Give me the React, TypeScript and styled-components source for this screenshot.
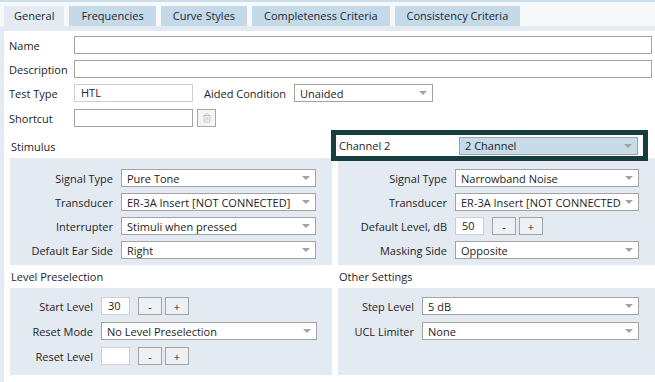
import React from 'react';
import styled, { createGlobalStyle } from 'styled-components';
import { Trash2 } from 'lucide-react';

const GlobalStyle = createGlobalStyle`
  * { box-sizing: border-box; }
  html, body {
    margin: 0;
    padding: 0;
    background: #fff;
  }
  body {
    font-family: "Open Sans", "Liberation Sans", sans-serif;
    font-size: 11px;
    color: #1e1e1e;
  }
`;

const tabs = [
  'General',
  'Frequencies',
  'Curve Styles',
  'Completeness Criteria',
  'Consistency Criteria',
];

function Select({ value, $tint }: { value: string; $tint?: boolean }) {
  return (
    <SelectBox $tint={$tint}>
      <SelectText>{value}</SelectText>
      <Arrow />
    </SelectBox>
  );
}

function Stepper({ value }: { value: string }) {
  return (
    <StepGroup>
      <NumberInput>{value}</NumberInput>
      <StepButtons>
        <StepButton>-</StepButton>
        <StepButton>+</StepButton>
      </StepButtons>
    </StepGroup>
  );
}

export default function App() {
  return (
    <Page>
      <GlobalStyle />
      <TabStrip>
        {tabs.map((tab, index) => (
          <Tab key={tab} $active={index === 0}>
            {tab}
          </Tab>
        ))}
      </TabStrip>
      <Frame>
        <Sheet>
          <FieldRow $gap={6}>
            <FieldLabel>Name</FieldLabel>
            <TextInput $grow />
          </FieldRow>
          <FieldRow $gap={6}>
            <FieldLabel>Description</FieldLabel>
            <TextInput $grow />
          </FieldRow>
          <FieldRow $gap={7}>
            <FieldLabel>Test Type</FieldLabel>
            <TextInput $width={119} $light>
              HTL
            </TextInput>
            <InlineLabel>Aided Condition</InlineLabel>
            <SelectSlot $width={139}>
              <Select value="Unaided" />
            </SelectSlot>
          </FieldRow>
          <FieldRow $gap={0}>
            <FieldLabel>Shortcut</FieldLabel>
            <TextInput $width={119} />
            <IconButton>
              <Trash2 size={10} color="#b9bfc6" strokeWidth={2} />
            </IconButton>
          </FieldRow>

          <Sections>
            <SectionTitle $top={0}>Stimulus</SectionTitle>
            <ChannelBox>
              <ChannelLabel>Channel 2</ChannelLabel>
              <Select value="2 Channel" $tint />
            </ChannelBox>

            <Panel $labelWidth={103} $padTop={11} $padBottom={6} $padRight={16} $rowGap={6}>
              <RowLabel>Signal Type</RowLabel>
              <Select value="Pure Tone" />
              <RowLabel>Transducer</RowLabel>
              <Select value="ER-3A Insert [NOT CONNECTED]" />
              <RowLabel>Interrupter</RowLabel>
              <Select value="Stimuli when pressed" />
              <RowLabel>Default Ear Side</RowLabel>
              <Select value="Right" />
            </Panel>
            <Panel $labelWidth={109} $padTop={11} $padBottom={6} $padRight={16} $rowGap={6}>
              <RowLabel>Signal Type</RowLabel>
              <Select value="Narrowband Noise" />
              <RowLabel>Transducer</RowLabel>
              <Select value="ER-3A Insert [NOT CONNECTED]" />
              <RowLabel>Default Level, dB</RowLabel>
              <Stepper value="50" />
              <RowLabel>Masking Side</RowLabel>
              <Select value="Opposite" />
            </Panel>

            <SectionTitle $top={4}>Level Preselection</SectionTitle>
            <SectionTitle $top={4}>Other Settings</SectionTitle>

            <Panel $labelWidth={83} $padTop={9} $padBottom={10} $padRight={15} $rowGap={7}>
              <RowLabel>Start Level</RowLabel>
              <Stepper value="30" />
              <RowLabel>Reset Mode</RowLabel>
              <Select value="No Level Preselection" />
              <RowLabel>Reset Level</RowLabel>
              <Stepper value="" />
            </Panel>
            <Panel $labelWidth={76} $padTop={9} $padBottom={10} $padRight={16} $rowGap={7}>
              <RowLabel>Step Level</RowLabel>
              <Select value="5 dB" />
              <RowLabel>UCL Limiter</RowLabel>
              <Select value="None" />
            </Panel>
          </Sections>
        </Sheet>
      </Frame>
    </Page>
  );
}

const Page = styled.div`
  width: 655px;
  height: 382px;
  overflow: hidden;
  background: #f6f8fa;
`;

const TabStrip = styled.div`
  display: flex;
  gap: 5px;
  padding: 4px 0 0 4px;
  border-top: 2px solid #c9ddeb;
  background: #f6f8fa;
`;

const Tab = styled.div<{ $active?: boolean }>`
  height: 20px;
  line-height: 20px;
  padding: 0 ${p => (p.$active ? 10 : 12)}px;
  background: ${p => (p.$active ? '#e3eaf1' : '#c4dae9')};
  color: #1c2733;
  white-space: nowrap;
`;

const Frame = styled.div`
  background: #e3eaf1;
  padding: 5px 0 0 4px;
`;

const Sheet = styled.div`
  height: 351px;
  background: #fff;
  padding: 5px 3px 0 5px;
`;

const FieldRow = styled.div<{ $gap: number }>`
  display: flex;
  align-items: center;
  height: 18px;
  margin-bottom: ${p => p.$gap}px;
`;

const FieldLabel = styled.div`
  width: 65px;
  flex: none;
  white-space: nowrap;
`;

const InlineLabel = styled.div`
  margin: 0 8px 0 11px;
  white-space: nowrap;
`;

const TextInput = styled.div<{ $width?: number; $grow?: boolean; $light?: boolean }>`
  height: 18px;
  flex: ${p => (p.$grow ? '1' : 'none')};
  width: ${p => (p.$width ? `${p.$width}px` : 'auto')};
  border: 1px solid ${p => (p.$light ? '#cfcfcf' : '#a3a3a3')};
  background: #fff;
  padding-left: 6px;
  line-height: 16px;
`;

const IconButton = styled.div`
  width: 19px;
  height: 18px;
  margin-left: 4px;
  display: flex;
  align-items: center;
  justify-content: center;
  border: 1px solid #a8a8a8;
  background: #f4f5f6;
`;

const SelectSlot = styled.div<{ $width: number }>`
  width: ${p => p.$width}px;
`;

const SelectBox = styled.div<{ $tint?: boolean }>`
  position: relative;
  flex: 1;
  min-width: 0;
  height: 18px;
  display: flex;
  align-items: center;
  padding: 0 17px 0 5px;
  border: 1px solid #a3a3a3;
  background: ${p => (p.$tint ? '#c6dcea' : '#fff')};
`;

const SelectText = styled.span`
  white-space: nowrap;
  overflow: hidden;
`;

const Arrow = styled.span`
  position: absolute;
  right: 5px;
  top: 6px;
  width: 0;
  height: 0;
  border-left: 4px solid transparent;
  border-right: 4px solid transparent;
  border-top: 4px solid #a3a3a3;
`;

const Sections = styled.div`
  display: grid;
  grid-template-columns: 322px 1fr;
  column-gap: 6px;
  margin: 0 -3px 0 1px;
`;

const SectionTitle = styled.div<{ $top: number }>`
  align-self: end;
  padding: ${p => p.$top}px 0 3px 1px;
  line-height: 16px;
`;

const ChannelBox = styled.div`
  position: relative;
  z-index: 1;
  display: flex;
  align-items: center;
  height: 31px;
  margin: 3px 7px -3px -7px;
  padding: 0 5px 0 3px;
  border: 5px solid #173e3f;
  background: #fff;
`;

const ChannelLabel = styled.div`
  width: 120px;
  flex: none;
`;

const Panel = styled.div<{
  $labelWidth: number;
  $padTop: number;
  $padBottom: number;
  $padRight: number;
  $rowGap: number;
}>`
  display: grid;
  grid-template-columns: ${p => p.$labelWidth}px 1fr;
  grid-auto-rows: 18px;
  align-content: start;
  align-items: center;
  column-gap: 8px;
  row-gap: ${p => p.$rowGap}px;
  padding: ${p => `${p.$padTop}px ${p.$padRight}px ${p.$padBottom}px 0`};
  background: #e3eaf1;
`;

const RowLabel = styled.div`
  text-align: right;
  white-space: nowrap;
`;

const StepGroup = styled.div`
  display: flex;
  gap: 8px;
`;

const NumberInput = styled.div`
  width: 29px;
  height: 18px;
  border: 1px solid #cfcfcf;
  background: #fff;
  padding-left: 6px;
  line-height: 16px;
`;

const StepButtons = styled.div`
  display: flex;
  gap: 3px;
`;

const StepButton = styled.div`
  width: 24px;
  height: 18px;
  display: flex;
  align-items: center;
  justify-content: center;
  border: 1px solid #a3a3a3;
  background: #edf1f5;
`;
